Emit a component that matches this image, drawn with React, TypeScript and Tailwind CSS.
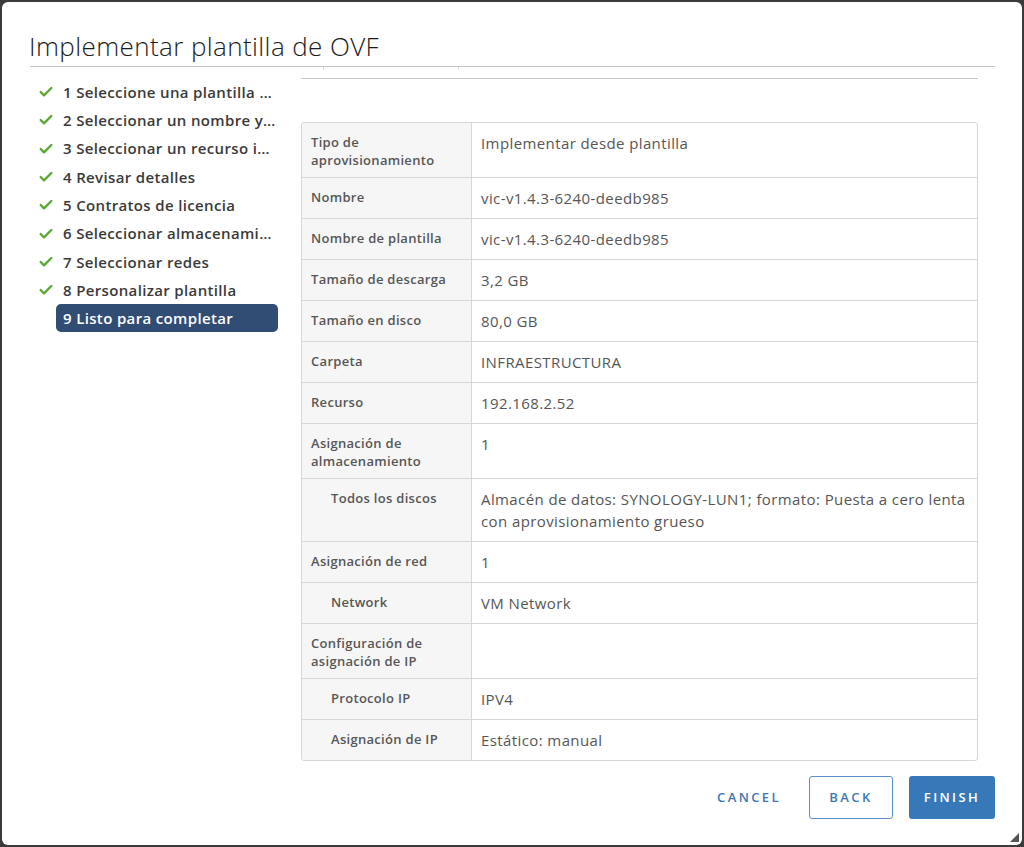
import { Check } from 'lucide-react';

type Row = { label: string; value: string; sub?: boolean };

const steps = [
  '1 Seleccione una plantilla de OVF',
  '2 Seleccionar un nombre y una carpeta',
  '3 Seleccionar un recurso informático',
  '4 Revisar detalles',
  '5 Contratos de licencia',
  '6 Seleccionar almacenamiento',
  '7 Seleccionar redes',
  '8 Personalizar plantilla',
];

const rows: Row[] = [
  { label: 'Tipo de aprovisionamiento', value: 'Implementar desde plantilla' },
  { label: 'Nombre', value: 'vic-v1.4.3-6240-deedb985' },
  { label: 'Nombre de plantilla', value: 'vic-v1.4.3-6240-deedb985' },
  { label: 'Tamaño de descarga', value: '3,2 GB' },
  { label: 'Tamaño en disco', value: '80,0 GB' },
  { label: 'Carpeta', value: 'INFRAESTRUCTURA' },
  { label: 'Recurso', value: '192.168.2.52' },
  { label: 'Asignación de almacenamiento', value: '1' },
  {
    label: 'Todos los discos',
    value: 'Almacén de datos: SYNOLOGY-LUN1; formato: Puesta a cero lenta con aprovisionamiento grueso',
    sub: true,
  },
  { label: 'Asignación de red', value: '1' },
  { label: 'Network', value: 'VM Network', sub: true },
  { label: 'Configuración de asignación de IP', value: '' },
  { label: 'Protocolo IP', value: 'IPV4', sub: true },
  { label: 'Asignación de IP', value: 'Estático: manual', sub: true },
];

export default function App() {
  return (
    <div className="h-[847px] w-[1024px] bg-[#3b3b3b] p-[2px] font-['Open_Sans',sans-serif]">
      <div className="relative flex h-full flex-col rounded-[6px] bg-white">
        <h1 className="ml-[27px] mt-[27px] text-[26px] font-light leading-[34px] tracking-[0.4px] text-[#1b1b1b]">
          Implementar plantilla de OVF
        </h1>
        <div className="relative ml-[28px] mr-[27px] mt-[3px] h-px bg-[#c4c4c4]">
          <span className="absolute left-[293px] top-px h-[3px] w-px bg-[#dcdcdc]" />
          <span className="absolute left-[428px] top-px h-[3px] w-px bg-[#dcdcdc]" />
        </div>

        <div className="flex flex-1">
          <nav className="ml-[36px] mt-[11px] w-[240px] shrink-0">
            <ul className="flex flex-col">
              {steps.map(s => (
                <li key={s} className="flex h-[28.3px] items-center">
                  <Check className="mr-[9px] h-[16px] w-[16px] shrink-0 text-[#5aa832]" strokeWidth={3.5} />
                  <span className="truncate text-[15px] font-semibold tracking-[0.35px] text-[#3a3a3a]">{s}</span>
                </li>
              ))}
              <li className="ml-[18px] flex h-[28px] items-center rounded-[5px] bg-[#314d74] px-[7px] text-[15px] font-semibold tracking-[0.35px] text-white">
                9 Listo para completar
              </li>
            </ul>
          </nav>

          <div className="ml-[23px] w-[677px]">
            <div className="mt-[11px] h-px bg-[#c8c8c8]" />
            <table className="mt-[43px] w-full border-separate border-spacing-0 overflow-hidden rounded-[3px] border border-[#d7d7d7] text-[#565656]">
              <tbody>
                {rows.map((r, i) => (
                  <tr key={r.label}>
                    <td
                      className={`w-[170px] border-r border-[#d7d7d7] bg-[#f6f6f6] pb-[8px] pr-[8px] pt-[10px] align-top text-[13px] font-semibold leading-[18px] tracking-[0.3px] ${
                        r.sub ? 'pl-[29px]' : 'pl-[9px]'
                      } ${i > 0 ? 'border-t' : ''}`}
                    >
                      {r.label}
                    </td>
                    <td
                      className={`border-[#d7d7d7] pb-[9px] pl-[9px] pr-[10px] pt-[9px] align-top text-[15px] leading-[22px] tracking-[0.4px] ${
                        i > 0 ? 'border-t' : ''
                      }`}
                    >
                      {r.value}
                    </td>
                  </tr>
                ))}
              </tbody>
            </table>
          </div>
        </div>

        <div className="mb-[26px] mr-[27px] flex justify-end gap-[16px] text-[13px] font-semibold tracking-[2.4px]">
          <button className="h-[43px] px-[12px] text-[#3a78b5]">CANCEL</button>
          <button className="h-[43px] w-[84px] rounded-[3px] border border-[#5b8fc7] text-[#3a78b5]">BACK</button>
          <button className="h-[43px] w-[86px] rounded-[3px] bg-[#3779b8] text-white">FINISH</button>
        </div>

        <svg className="absolute bottom-[3px] right-[3px]" width="9" height="9" viewBox="0 0 9 9">
          <path d="M9 0 L9 9 L0 9 Z" fill="#555" />
        </svg>
      </div>
    </div>
  );
}
